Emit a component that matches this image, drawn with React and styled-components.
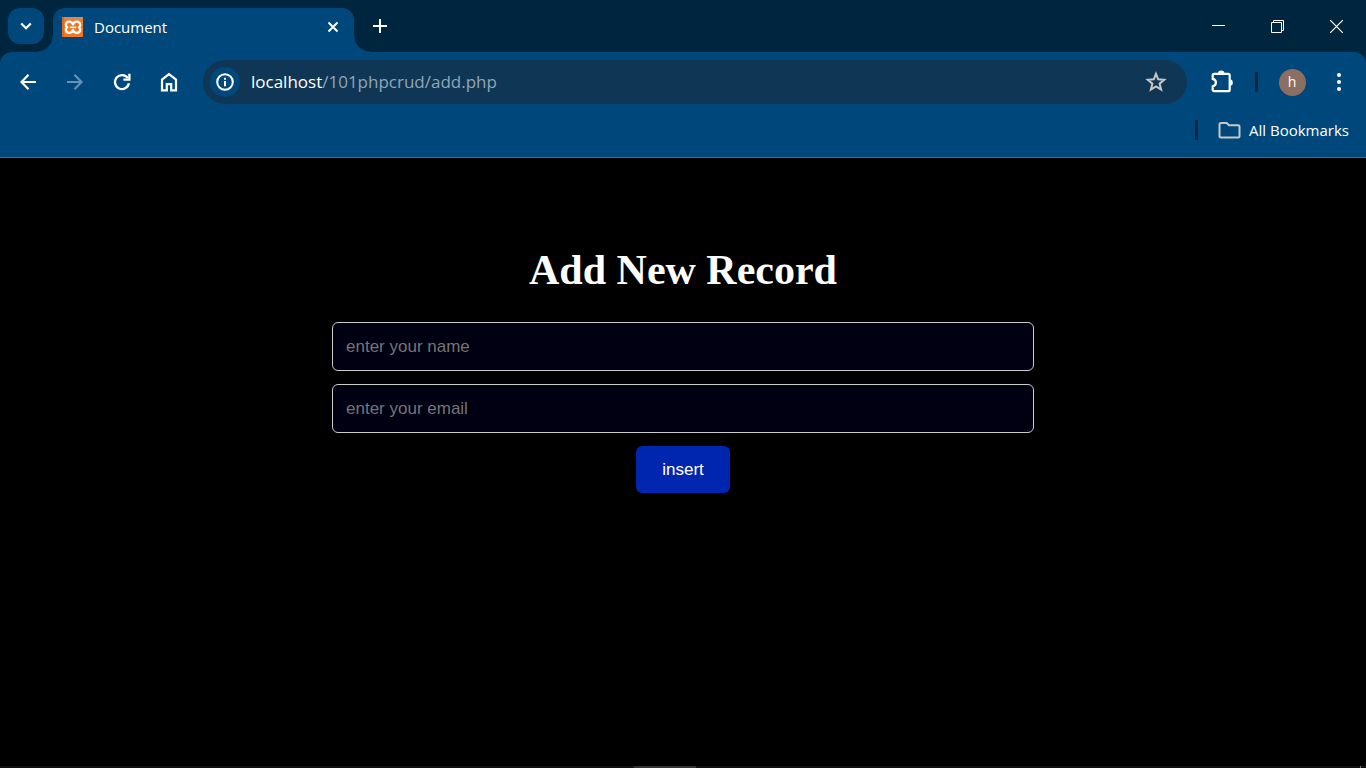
import React from "react";
import styled, { createGlobalStyle } from "styled-components";

const frame = "#00253f";
const bar = "#00487b";
const ui = '"Open Sans", "Noto Sans", sans-serif';

const GlobalStyle = createGlobalStyle`
  *, *::before, *::after { box-sizing: border-box; }
  body { margin: 0; background: #000; }
`;

const Page = styled.div`
  min-height: 100vh;
  display: flex;
  flex-direction: column;
  background: #000;
`;

const Browser = styled.header`
  background: ${frame};
  color: #fff;
  font-family: ${ui};
`;

const TabStrip = styled.div`
  display: flex;
  height: 52px;
  padding: 8px 0 0 8px;
`;

const PlainButton = styled.button`
  display: grid;
  place-items: center;
  width: ${(p) => p.$w || 44}px;
  height: ${(p) => p.$h || 44}px;
  padding: 0;
  border: 0;
  border-radius: 12px;
  background: ${(p) => p.$bg || "transparent"};
  color: ${(p) => p.$color || "#fff"};
  flex: none;
  svg { display: block; }
`;

const Tab = styled.div`
  position: relative;
  display: flex;
  align-items: center;
  width: 301px;
  height: 44px;
  margin-left: 9px;
  padding: 0 10px 7px 9px;
  gap: 11px;
  background: ${bar};
  border-radius: 12px 12px 0 0;
  font-size: 15px;
  line-height: 20px;

  &::before, &::after {
    content: "";
    position: absolute;
    bottom: 0;
    width: 16px;
    height: 16px;
  }
  &::before {
    right: 100%;
    background: radial-gradient(circle at 0 0, transparent 15px, ${bar} 16px);
  }
  &::after {
    left: 100%;
    background: radial-gradient(circle at 100% 0, transparent 15px, ${bar} 16px);
  }
`;

const TabTitle = styled.span`
  flex: 1;
`;

const WindowControls = styled.div`
  display: flex;
  margin-left: auto;
`;

const Toolbars = styled.div`
  background: ${bar};
  border-radius: 12px 12px 0 0;
  border-bottom: 1px solid #336d95;
`;

const Toolbar = styled.nav`
  display: flex;
  align-items: center;
  gap: 3px;
  height: 60px;
  padding: 0 5px 0 6px;
`;

const AddressBar = styled.div`
  flex: 1;
  display: flex;
  align-items: center;
  gap: 11px;
  height: 44px;
  margin: 0 10px 0 9px;
  padding: 0 9px 0 7px;
  border-radius: 22px;
  background: #0f3655;
`;

const InfoButton = styled(PlainButton)`
  border-radius: 50%;
`;

const Url = styled.div`
  flex: 1;
  color: #8fa6b7;
  font-size: 17px;
  line-height: 24px;
  white-space: nowrap;
  outline: none;
  b { font-weight: 400; color: #fff; }
`;

const Divider = styled.span`
  width: 3px;
  height: 20px;
  border-radius: 1px;
  background: ${frame};
  flex: none;
`;

const ProfileArea = styled.div`
  display: flex;
  align-items: center;
  gap: 12px;
  margin-left: 8px;
`;

const Avatar = styled.span`
  display: grid;
  place-items: center;
  width: 27px;
  height: 27px;
  border-radius: 50%;
  background: #8d6e63;
  color: #fff;
  font: 14px/20px ${ui};
`;

const BookmarksBar = styled.div`
  display: flex;
  align-items: center;
  justify-content: flex-end;
  gap: 20px;
  height: 45px;
  padding: 0 17px 10px 0;
`;

const BookmarksButton = styled.button`
  display: flex;
  align-items: center;
  gap: 8px;
  padding: 0;
  border: 0;
  background: none;
  color: #fff;
  font: 15px/20px ${ui};
`;

const Main = styled.main`
  flex: 1;
  padding: 88px 16px 40px;
  text-align: center;
`;

const Heading = styled.h1`
  margin: 0 0 28px;
  color: #fff;
  font: bold 42px/48px "Liberation Serif", serif;
`;

const Form = styled.form`
  display: flex;
  flex-direction: column;
  align-items: center;
  gap: 13px;
  max-width: 702px;
  margin: 0 auto;
`;

const Field = styled.input`
  width: 100%;
  height: 49px;
  padding: 0 13px;
  border: 1px solid #ccc;
  border-radius: 6px;
  background: #000013;
  color: #fff;
  font: 17px/20px "Liberation Sans", sans-serif;
  &::placeholder { color: #757575; opacity: 1; }
`;

const Submit = styled.button`
  padding: 14px 26px 13px;
  border: 0;
  border-radius: 6px;
  background: #0026b0;
  color: #fff;
  font: 17px/20px "Liberation Sans", sans-serif;
`;

const BottomEdge = styled.footer`
  display: flex;
  justify-content: space-between;
  height: 2px;
  padding: 0 5px 0 46.4%;
  background: #111;
`;

const EdgeMark = styled.span`
  width: ${(p) => p.$w}px;
  background: ${(p) => p.$color};
`;

function Icon({ w = 24, h = w, box, sw = 2, children }) {
  return (
    <svg width={w} height={h} viewBox={box || `0 0 ${w} ${h}`} fill="none" stroke="currentColor" strokeWidth={sw} aria-hidden="true">
      {children}
    </svg>
  );
}

function Favicon() {
  return (
    <svg width="21" height="20" viewBox="0 0 21 20" aria-hidden="true">
      <rect width="21" height="20" rx="1" fill="#f37623" />
      <path d="M0 0H21V2.5H0Z" fill="#d08a5c" />
      <path d="M0 0H2V20H0Z" fill="#dc6a20" />
      <path
        d="M11 7.4C11.8 5.4 13 4.7 14.8 4.7C17.2 4.7 18.4 6.4 18.2 8.1C18.1 9 17.7 9.7 17 10.3C17.8 10.9 18.2 11.6 18.2 12.5C18.2 14.5 16.8 15.8 14.8 15.8C13 15.8 11.8 15 11 13.2C10.2 15 9 15.8 7.2 15.8C5.2 15.8 3.9 14.5 3.9 12.5C3.9 11.6 4.3 10.9 5.1 10.3C4.4 9.7 4 9 3.9 8.1C3.8 6.4 4.9 4.7 7.2 4.7C9 4.7 10.2 5.4 11 7.4Z"
        fill="none" stroke="#fff" strokeWidth="2.3" strokeLinejoin="round"
      />
      <path d="M8.6 10.3H13.4" stroke="#fff" strokeWidth="1.8" strokeLinecap="round" />
    </svg>
  );
}

export default function App() {
  return (
    <Page>
      <GlobalStyle />
      <Browser>
        <TabStrip>
          <PlainButton $w={36} $h={36} $bg={bar} aria-label="Search tabs">
            <Icon w={12} sw={2.2}><path d="M1.2 3.5L6 8.2L10.8 3.5" /></Icon>
          </PlainButton>
          <Tab>
            <Favicon />
            <TabTitle>Document</TabTitle>
            <PlainButton $w={22} $h={22} aria-label="Close tab">
              <Icon w={12} sw={2}><path d="M1.5 1.5L10.5 10.5M10.5 1.5L1.5 10.5" /></Icon>
            </PlainButton>
          </Tab>
          <PlainButton $w={52} $h={36} aria-label="New tab">
            <Icon w={14} sw={2}><path d="M7 0V14M0 7H14" /></Icon>
          </PlainButton>
          <WindowControls>
            <PlainButton $w={59} $h={36} aria-label="Minimize">
              <Icon w={13} sw={1}><path d="M0 5.5H13" /></Icon>
            </PlainButton>
            <PlainButton $w={59} $h={36} aria-label="Restore">
              <Icon w={13} sw={1}><path d="M.5 2.5H10.5V12.5H.5ZM2.5 2.5V.5H12.5V10.5H10.5" /></Icon>
            </PlainButton>
            <PlainButton $w={59} $h={36} aria-label="Close window">
              <Icon w={13} sw={1.2}><path d="M0 0L13 13M13 0L0 13" /></Icon>
            </PlainButton>
          </WindowControls>
        </TabStrip>
        <Toolbars>
          <Toolbar aria-label="Navigation">
            <PlainButton aria-label="Back">
              <Icon w={16} sw={2.2}><path d="M16 8H1.5M8.5 .8L1.5 8L8.5 15.2" /></Icon>
            </PlainButton>
            <PlainButton $color="#6691b0" aria-label="Forward">
              <Icon w={16} sw={2.2}><path d="M0 8H14.5M7.5 .8L14.5 8L7.5 15.2" /></Icon>
            </PlainButton>
            <PlainButton aria-label="Reload">
              <Icon w={18} sw={2.3}>
                <path d="M14.8 5.2A7 7 0 1 0 15.9 10.3" />
                <path d="M16.4 .8V6.6H10.4" />
              </Icon>
            </PlainButton>
            <PlainButton aria-label="Home">
              <Icon w={18} h={20} sw={2.2}><path d="M2 18.4V7.6L9 2.2L16 7.6V18.4H11.2V12.2H6.8V18.4Z" /></Icon>
            </PlainButton>
            <AddressBar>
              <InfoButton $w={30} $h={30} $bg={bar} aria-label="View site information">
                <Icon w={18} sw={2}><circle cx="9" cy="9" r="7.8" /><path d="M9 8V13.2M9 4.8V6.8" /></Icon>
              </InfoButton>
              <Url role="textbox" aria-label="Address" contentEditable suppressContentEditableWarning spellCheck={false}>
                <b>localhost</b>/101phpcrud/add.php
              </Url>
              <PlainButton $color="#c7c7c7" aria-label="Bookmark this page">
                <Icon w={22} sw={2}>
                  <path d="M11 2.8L13.2 8.3L19.2 8.8L14.6 12.7L16.1 18.6L11 15.4L5.9 18.6L7.4 12.7L2.8 8.8L8.8 8.3Z" />
                </Icon>
              </PlainButton>
            </AddressBar>
            <PlainButton aria-label="Extensions">
              <Icon w={24} sw={2.2}>
                <path d="M4.2 3.8H18.2Q19.7 3.8 19.7 5.3V19.7Q19.7 21.2 18.2 21.2H4.2Q2.7 21.2 2.7 19.7V16.4C7 15.4 7 9.8 2.7 8.9V5.3Q2.7 3.8 4.2 3.8Z" />
                <path d="M8 3.2A3.2 2.6 0 0 1 14.4 3.2ZM20.2 9.4A2.6 3.2 0 0 1 20.2 15.8Z" fill="currentColor" stroke="none" />
              </Icon>
            </PlainButton>
            <ProfileArea>
              <Divider />
              <PlainButton aria-label="Profile"><Avatar>h</Avatar></PlainButton>
            </ProfileArea>
            <PlainButton aria-label="Menu">
              <Icon w={4} h={20}>
                <g fill="currentColor" stroke="none"><circle cx="2" cy="3" r="2" /><circle cx="2" cy="10" r="2" /><circle cx="2" cy="17" r="2" /></g>
              </Icon>
            </PlainButton>
          </Toolbar>
          <BookmarksBar>
            <Divider />
            <BookmarksButton>
              <Icon w={23} h={18} sw={2}>
                <path d="M3 2H8.7L11 4.3H20Q21.5 4.3 21.5 5.8V15Q21.5 16.5 20 16.5H3Q1.5 16.5 1.5 15V3.5Q1.5 2 3 2Z" stroke="#c7c7c7" />
              </Icon>
              All Bookmarks
            </BookmarksButton>
          </BookmarksBar>
        </Toolbars>
      </Browser>
      <Main>
        <Heading>Add New Record</Heading>
        <Form onSubmit={(e) => e.preventDefault()}>
          <Field type="text" name="name" placeholder="enter your name" aria-label="Name" />
          <Field type="email" name="email" placeholder="enter your email" aria-label="Email" />
          <Submit type="submit">insert</Submit>
        </Form>
      </Main>
      <BottomEdge>
        <EdgeMark $w={62} $color="#333" />
        <EdgeMark $w={1} $color="#777" />
      </BottomEdge>
    </Page>
  );
}
